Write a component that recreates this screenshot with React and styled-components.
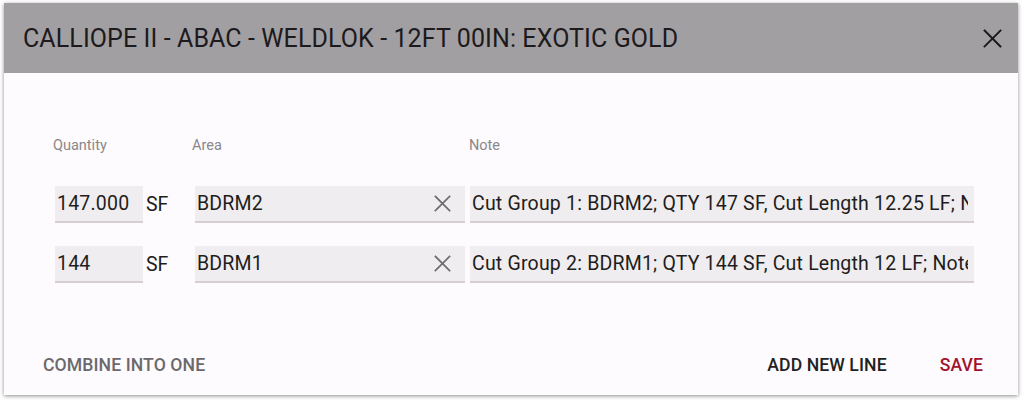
import React from "react";
import styled, { createGlobalStyle } from "styled-components";

const GlobalStyle = createGlobalStyle`
  html, body {
    margin: 0;
    padding: 0;
    background: #ffffff;
  }
  body {
    font-family: Roboto, "Liberation Sans", sans-serif;
  }
`;

const Page = styled.div`
  width: 1025px;
  height: 402px;
  padding: 3px 7px 7px 4px;
  box-sizing: border-box;
`;

const Dialog = styled.div`
  height: 100%;
  display: flex;
  flex-direction: column;
  background: #fdfbfd;
  box-shadow: 0 1px 4px rgba(0, 0, 0, 0.45);
  overflow: hidden;
`;

const Header = styled.div`
  height: 70px;
  flex-shrink: 0;
  display: flex;
  align-items: center;
  justify-content: space-between;
  padding: 0 12px 0 19px;
  background: #a29fa2;
`;

const Title = styled.h2`
  margin: 0;
  font-size: 25px;
  font-weight: 400;
  color: #1c1a1d;
  letter-spacing: 0.1px;
`;

const CloseButton = styled.button`
  width: 28px;
  height: 28px;
  padding: 0;
  border: 0;
  background: transparent;
  display: flex;
  align-items: center;
  justify-content: center;
  cursor: pointer;
`;

const Body = styled.div`
  flex: 1;
  display: flex;
  flex-direction: column;
  padding: 64px 44px 0 51px;
`;

const Grid = styled.div`
  display: grid;
  grid-template-columns: 88px 52px 275px 1fr;
  row-gap: 23px;
`;

const LabelRow = styled.div`
  display: contents;
`;

const Label = styled.div`
  font-size: 14.5px;
  color: #8a878a;
  margin-left: ${(p) => p.$shift || 0}px;
  margin-bottom: 9px;
`;

const Field = styled.div`
  height: 37px;
  display: flex;
  align-items: center;
  background: #efedef;
  border-bottom: 2px solid #d6ced4;
  box-sizing: border-box;
  padding: 0 6px 0 2px;
  margin-right: ${(p) => p.$gap || 0}px;
  overflow: hidden;
`;

const FieldText = styled.span`
  flex: 1;
  font-size: 19.5px;
  letter-spacing: 0.2px;
  color: #1f1d20;
  white-space: nowrap;
  overflow: hidden;
`;

const Unit = styled.div`
  display: flex;
  align-items: center;
  padding-left: 3px;
  font-size: 19.5px;
  color: #1f1d20;
`;

const ClearIcon = styled.span`
  display: flex;
  align-items: center;
  margin-right: 8px;
`;

const Actions = styled.div`
  margin-top: auto;
  height: 58px;
  display: flex;
  align-items: center;
  padding: 0 35px 0 39px;
  margin: auto -44px 1px -51px;
`;

const ActionButton = styled.button`
  border: 0;
  background: transparent;
  padding: 0;
  font-family: inherit;
  font-size: 17.6px;
  font-weight: 500;
  letter-spacing: 0.1px;
  text-transform: uppercase;
  color: ${(p) => p.$color || "#222"};
  margin-left: ${(p) => p.$ml || 0};
  cursor: pointer;
`;

const Cross = ({ size = 18, color = "#1c1a1d", width = 2 }) => (
  <svg width={size} height={size} viewBox="0 0 18 18">
    <path d="M1.5 1.5 L16.5 16.5 M16.5 1.5 L1.5 16.5" stroke={color} strokeWidth={width} strokeLinecap="square" />
  </svg>
);

const lines = [
  {
    qty: "147.000",
    area: "BDRM2",
    note: "Cut Group 1: BDRM2; QTY 147 SF, Cut Length 12.25 LF; Note",
  },
  {
    qty: "144",
    area: "BDRM1",
    note: "Cut Group 2: BDRM1; QTY 144 SF, Cut Length 12 LF; Note",
  },
];

const App = () => {
  return (
    <>
      <GlobalStyle />
      <Page>
        <Dialog>
          <Header>
            <Title>CALLIOPE II - ABAC - WELDLOK - 12FT 00IN: EXOTIC GOLD</Title>
            <CloseButton>
              <Cross size={19} width={1.9} />
            </CloseButton>
          </Header>
          <Body>
            <Grid>
              <LabelRow>
                <Label $shift={-2}>Quantity</Label>
                <Label />
                <Label $shift={-3}>Area</Label>
                <Label $shift={-1}>Note</Label>
              </LabelRow>
              {lines.map((line) => (
                <React.Fragment key={line.area}>
                  <Field>
                    <FieldText>{line.qty}</FieldText>
                  </Field>
                  <Unit>SF</Unit>
                  <Field $gap={5}>
                    <FieldText>{line.area}</FieldText>
                    <ClearIcon>
                      <Cross size={17} color="#6f6c70" width={1.8} />
                    </ClearIcon>
                  </Field>
                  <Field>
                    <FieldText>{line.note}</FieldText>
                  </Field>
                </React.Fragment>
              ))}
            </Grid>
            <Actions>
              <ActionButton $color="#6b686b">Combine into one</ActionButton>
              <ActionButton $color="#222" $ml="auto">Add new line</ActionButton>
              <ActionButton $color="#a3122c" $ml="53px">Save</ActionButton>
            </Actions>
          </Body>
        </Dialog>
      </Page>
    </>
  );
};

export default App;
